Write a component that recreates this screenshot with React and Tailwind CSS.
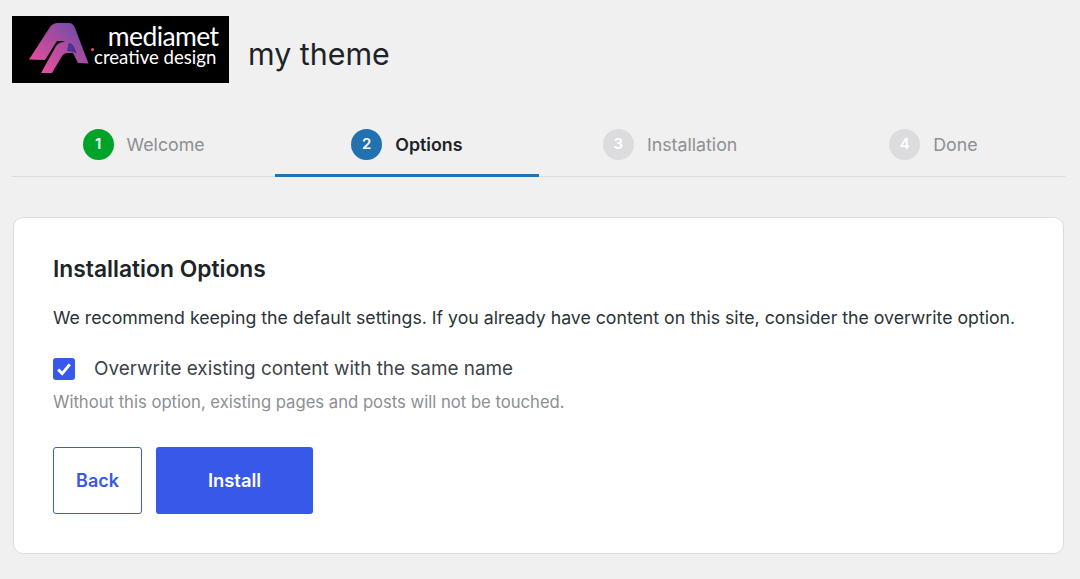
function Logo() {
  return (
    <div className="-ml-px flex h-[67px] w-[217px] shrink-0 items-start justify-between bg-black pl-[12px] pr-[11px] pt-[4px]">
      <svg width="70" height="60" viewBox="0 0 70 60" className="shrink-0">
        <defs>
          <linearGradient id="a" x1="0" y1="1" x2="1" y2="0.2">
            <stop offset="0" stopColor="#e4509f" />
            <stop offset="0.55" stopColor="#a94c9d" />
            <stop offset="1" stopColor="#6a4cb0" />
          </linearGradient>
          <linearGradient id="b" x1="0" y1="1" x2="1" y2="0.1">
            <stop offset="0" stopColor="#e6509f" />
            <stop offset="1" stopColor="#a04a9e" />
          </linearGradient>
        </defs>
        <path d="M5 39.5 L26 7 Q29 3 34 3 L45 3 Q49 3 51 8 L64.5 43.5 L54 43 L46 27 Q43 21 37 21 L33 21 L21 40 Z" fill="url(#a)" />
        <path d="M17 53 L32 26 Q35 22 40 22 L44 22 Q48 22 50 26 L53 33 L44 33 Q40 33 38 36 L28 53 Z" fill="url(#b)" />
        <path d="M44.5 23 Q48.5 23 50 27 L53 33 L43 31 Z" fill="#4a3296" />
      </svg>
      <div className="flex flex-col items-end font-['Lato',sans-serif] text-white">
        <span className="pt-[4px] text-[26.5px] leading-[24px] tracking-[-0.6px]">mediamet</span>
        <span className="relative pr-[2px] text-[18.6px] leading-[18px] whitespace-nowrap">
          <span className="absolute -left-[3px] top-[0px] h-[3px] w-[3px] rounded-full bg-[#e84a7f]" />
          creative design
        </span>
      </div>
    </div>
  );
}

function Step({ n, label, state }) {
  const circle =
    state === "done" ? "bg-[#00a32a]" : state === "active" ? "bg-[#2271b1]" : "bg-[#dcdcde]";
  const text =
    state === "active" ? "text-[#1d2327] font-semibold" : "text-[#8c8f94] font-normal";
  const tab = state === "active" ? "border-[#2271b1]" : "border-transparent";
  return (
    <div className={`-mb-px flex h-[66px] w-1/4 items-center justify-center gap-[13px] border-b-[3px] pt-[4px] ${tab}`}>
      <span className={`flex h-[31px] w-[31px] items-center justify-center rounded-full text-[15px] font-semibold text-white ${circle}`}>
        {n}
      </span>
      <span className={`text-[17.8px] leading-[24px] ${text}`}>{label}</span>
    </div>
  );
}

export default function App() {
  return (
    <div className="min-h-[579px] overflow-hidden bg-[#f0f0f1] pl-[13px] pr-[16px] pt-[16px] font-['Inter',sans-serif]">
      <div className="flex items-center gap-[19px]">
        <Logo />
        <h1 className="pt-[8px] text-[30.4px] leading-[40px] font-normal text-[#1d2327]">my theme</h1>
      </div>
      <div className="-mx-px mt-[28px] flex border-b border-[#dcdcde]">
        <Step n="1" label="Welcome" state="done" />
        <Step n="2" label="Options" state="active" />
        <Step n="3" label="Installation" state="todo" />
        <Step n="4" label="Done" state="todo" />
      </div>
      <div className="mt-[40px] h-[337px] rounded-[10px] border border-[#dcdcde] bg-white px-[39px] pt-[37px]">
        <h2 className="text-[22.8px] leading-[28px] font-semibold text-[#1d2327]">Installation Options</h2>
        <p className="mt-[21px] text-[17.72px] leading-[28px] text-[#2c3338] whitespace-nowrap">
          We recommend keeping the default settings. If you already have content on this site, consider the overwrite option.
        </p>
        <label className="mt-[23px] flex h-[28px] items-center gap-[19px]">
          <span className="flex h-[22px] w-[22px] items-center justify-center rounded-[3px] bg-[#3858e9]">
            <svg width="16" height="16" viewBox="0 0 16 16" fill="none">
              <path d="M2.2 8.5 L6.2 12.6 L13.8 3.4" stroke="white" strokeWidth="3" />
            </svg>
          </span>
          <span className="text-[18.9px] leading-[28px] text-[#3c434a]">Overwrite existing content with the same name</span>
        </label>
        <p className="mt-[7px] text-[16.65px] leading-[24px] text-[#8c8f94]">
          Without this option, existing pages and posts will not be touched.
        </p>
        <div className="mt-[33px] flex gap-[14px]">
          <button className="h-[67px] w-[89px] rounded-[3px] border border-[#3858e9] bg-white text-[18px] font-semibold text-[#3858e9]">Back</button>
          <button className="h-[67px] w-[157px] rounded-[3px] bg-[#3858e9] text-[18.4px] font-semibold text-white">Install</button>
        </div>
      </div>
    </div>
  );
}
